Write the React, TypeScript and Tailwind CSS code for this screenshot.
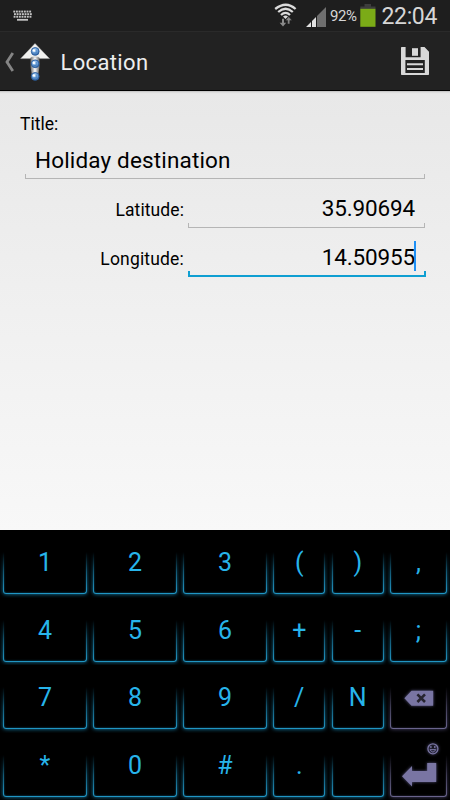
import React from "react";

const FONT = "font-[Roboto,'Liberation_Sans',sans-serif]";

function KeyboardIcon() {
  const row = (y: number, x0: number, n: number) =>
    Array.from({ length: n }, (_, i) => (
      <rect key={`${y}-${i}`} x={x0 + i * 2.65} y={y} width="1.9" height="1.9" />
    ));
  return (
    <svg width="20" height="12" viewBox="0 0 20 12" fill="#c4c4c4">
      {row(0.6, 0.3, 7)}
      {row(3.2, 1, 7)}
      {row(5.8, 0.6, 7)}
      <rect x="4" y="8.9" width="11" height="1.8" />
    </svg>
  );
}

function WifiIcon() {
  return (
    <svg width="24" height="24" viewBox="0 0 24 24" fill="none">
      <g stroke="#dcdcdc" strokeWidth="2.3">
        <path d="M1.2 6 Q12 -2.6 21.6 6" />
        <path d="M4.2 9 Q11.6 2.6 18.8 9" />
        <path d="M7 12 Q11.6 7.8 16 12" />
      </g>
      <path d="M9 13.6 Q11.6 11.6 14 13.6 L11.5 16z" fill="#dcdcdc" />
      <path d="M8 15.8v4H5.6l3.4 3.8 3.2-3.8h-2.2v-4z" fill="#8a8a8a" />
      <path d="M13.6 21v-3.4h-2.2l3.3-4 3.3 4h-2.2v3.4z" fill="#8a8a8a" stroke="#1e1e1e" strokeWidth="0.5" />
    </svg>
  );
}

function SignalIcon() {
  return (
    <svg width="20" height="20" viewBox="0 0 20 20">
      <path d="M0 20 L5 15 V20z M6 20 V14 L10 10 V20z" fill="#e2e2e2" />
      <path d="M11 20 V9 L20 0 V20z" fill="#6f6f6f" />
    </svg>
  );
}

function BatteryIcon() {
  return (
    <svg width="16" height="23" viewBox="0 0 16 23">
      <rect x="4.5" y="0" width="6.5" height="3" fill="#3d3d3d" />
      <rect x="0.3" y="2.5" width="15.2" height="2.5" fill="#3d3d3d" />
      <rect x="0.3" y="4.8" width="15.2" height="18" fill="#7bab17" />
    </svg>
  );
}

function AppLogo() {
  return (
    <svg width="30" height="40" viewBox="0 0 30 40">
      <defs>
        <linearGradient id="shaft" x1="0" x2="1">
          <stop offset="0" stopColor="#666" />
          <stop offset="0.5" stopColor="#fff" />
          <stop offset="1" stopColor="#666" />
        </linearGradient>
        <radialGradient id="ball" cx="0.45" cy="0.4" r="0.6">
          <stop offset="0" stopColor="#e6f3ff" />
          <stop offset="0.45" stopColor="#82b3e6" />
          <stop offset="1" stopColor="#275a9c" />
        </radialGradient>
      </defs>
      <path d="M10.5 14h9v10l-2 12h-5l-2-12z" fill="url(#shaft)" />
      <path d="M15 0.5 L29.5 15.6 H19.8 L18.5 14H11.5L10.2 15.6 H0.7z" fill="#f2f2f0" stroke="#aaa" strokeWidth="0.5" />
      {[8.4, 20.8, 33.4].map((y) => (
        <g key={y}>
          <circle cx="15.2" cy={y} r="3.9" fill="url(#ball)" stroke="#2d609f" strokeWidth="0.9" />
          <path d={`M13.4 ${y + 1.6}h2.8v-3.4`} stroke="#3976b7" strokeWidth="0.8" fill="none" />
          <circle cx="13.8" cy={y - 1} r="1.2" fill="#fff" />
        </g>
      ))}
    </svg>
  );
}

function SaveIcon() {
  return (
    <svg width="30" height="30" viewBox="0 0 30 30">
      <path
        fillRule="evenodd"
        fill="#d8d8d8"
        d="M1.7 1H5.6V11.3H20.6V1H24.5L29 5.7V28.3Q29 29 28.3 29H1.7Q1 29 1 28.3V1.7Q1 1 1.7 1z M5.4 14V27H24.8V14z"
      />
      <path d="M12 2.2h6v7.6h-6z" fill="#d8d8d8" />
      <path d="M7 17.2h16v2H7z M7 22h16v2H7z" fill="#d8d8d8" />
    </svg>
  );
}

function Backspace() {
  return (
    <svg width="36" height="24" viewBox="0 0 36 24" className="mt-[21px] drop-shadow-[0_0_1.5px_#55527c]">
      <path d="M3.4 12.2 L10.5 4.8H32.2V19.8H10.5z" fill="#7975a3" />
      <path d="M16.4 8.4l7.6 7.6M24 8.4l-7.6 7.6" stroke="#26242f" strokeWidth="2.6" />
    </svg>
  );
}

function Enter() {
  return (
    <svg width="42" height="46" viewBox="0 0 42 46" className="mt-[8px] drop-shadow-[0_0_1.5px_#55527c]">
      <g fill="none" stroke="#7975a3" strokeWidth="1.3">
        <circle cx="34.9" cy="7.8" r="5" />
        <path d="M32 8.6 Q34.9 13.6 37.8 8.6z" strokeWidth="1" />
        <path d="M32.9 5v2M36.8 5v2" />
      </g>
      <path d="M4 35.2 L14 25V30H29.2V22H38.2V41H14V45.6z" fill="#7975a3" />
    </svg>
  );
}

function Key({ label, muted, children }: { label?: string; muted?: boolean; children?: React.ReactNode }) {
  return (
    <div className="grid h-[67.5px]">
      <div className="col-start-1 row-start-1 flex pt-[20px] pr-[3.5px] pb-[3.5px] pl-[3px] [mask-image:linear-gradient(to_bottom,transparent_22px,rgba(0,0,0,0.6)_42px,black_63px)]">
        <div
          className={
            muted
              ? "flex-1 rounded-b-[3px] border-x border-b border-[#69648c] shadow-[0_0_4px_#4d4870,inset_0_0_2px_#3b3757]"
              : "flex-1 rounded-b-[3px] border-x border-b border-[#2095c3] shadow-[0_0_4px_#1684b0,inset_0_0_2px_#0d6488]"
          }
        />
      </div>
      <div className="col-start-1 row-start-1 flex justify-center text-[25px] leading-[65px] text-[#27b4ea]">
        {children ?? <span>{label}</span>}
      </div>
    </div>
  );
}

function Underline({ focused }: { focused?: boolean }) {
  return focused ? (
    <div className="h-[6px] border-x-2 border-b-2 border-[#0f9fd2]" />
  ) : (
    <div className="h-[5px] border-x border-b border-[#b5b5b5]" />
  );
}

const KEYS = ["1", "2", "3", "(", ")", ",", "4", "5", "6", "+", "-", ";", "7", "8", "9", "/", "N", "back", "*", "0", "#", ".", "", "enter"];

export default function App() {
  return (
    <div className={`flex h-[800px] w-[450px] flex-col overflow-hidden bg-black ${FONT}`}>
      <div className="flex h-[31px] items-start bg-[#1e1e1e] text-[#d6d6d6]">
        <div className="mt-[10px] ml-[13px]"><KeyboardIcon /></div>
        <div className="mt-[3px] ml-[241px]"><WifiIcon /></div>
        <div className="mt-[7px] ml-[8px]"><SignalIcon /></div>
        <span className="ml-[4px] w-[30px] text-[15px] leading-[33px] tracking-[-0.4px] whitespace-nowrap">92%</span>
        <div className="mt-[4px] -ml-[0.5px]"><BatteryIcon /></div>
        <span className="ml-[6px] text-[23px] leading-[33px] tracking-[-0.35px]">22:04</span>
      </div>
      <header className="flex h-[60px] items-start border-t border-b border-t-[#2a2a2a] border-b-black bg-[#222]">
        <svg width="12" height="20" viewBox="0 0 12 20" className="mt-[20px] ml-[4px]">
          <path d="M8.8 1 L3 10 L8.8 19" fill="none" stroke="#858585" strokeWidth="2.8" />
        </svg>
        <div className="mt-[11px] ml-[4px]"><AppLogo /></div>
        <h1 className="mt-[14px] ml-[10.5px] text-[22px] leading-[33px] tracking-[0.35px] text-[#eee]">Location</h1>
        <div className="mt-[14px] mr-[20px] ml-auto"><SaveIcon /></div>
      </header>
      <main className="flex h-[439px] flex-col bg-linear-to-b from-[#e8e8e8] to-[#f8f8f8] pr-[25px] pl-[20px] text-black shadow-[inset_0_3px_2px_-2px_#bdbdbd]">
        <label className="mt-[22px] text-[17.5px] leading-[22px]">Title:</label>
        <div className="mt-[8px] ml-[5px] h-[36px]">
          <div className="h-[31px] pl-[10px] text-[22.5px] leading-[34px] tracking-[0.16px]">Holiday destination</div>
          <Underline />
        </div>
        <div className="mt-[11px] flex h-[38px]">
          <label className="w-[164px] text-right text-[17.5px] leading-[40px] tracking-[0.1px]">Latitude:</label>
          <div className="ml-[4px] flex-1">
            <div className="h-[33px] pr-[10px] text-right text-[22.5px] leading-[37px] tracking-[-0.15px]">35.90694</div>
            <Underline />
          </div>
        </div>
        <div className="mt-[11px] flex h-[39px]">
          <label className="w-[164px] text-right text-[17.5px] leading-[40px] tracking-[0.18px]">Longitude:</label>
          <div className="-mr-px ml-[4px] flex-1">
            <div className="flex h-[32px] justify-end pr-[10.5px] text-[22.5px] leading-[37px] tracking-[-0.15px]">
              14.50955
              <i className="mt-[2px] -ml-[1.5px] h-[30px] w-[2px] bg-[#1e90f5]" />
            </div>
            <Underline focused />
          </div>
        </div>
      </main>
      <div className="grid h-[270px] grid-cols-[90px_90px_90px_58.5px_58.5px_63px] bg-black">
        {KEYS.map((k, i) => {
          if (k === "back") return <Key key={i} muted><Backspace /></Key>;
          if (k === "enter") return <Key key={i} muted><Enter /></Key>;
          return <Key key={i} label={k} />;
        })}
      </div>
    </div>
  );
}
